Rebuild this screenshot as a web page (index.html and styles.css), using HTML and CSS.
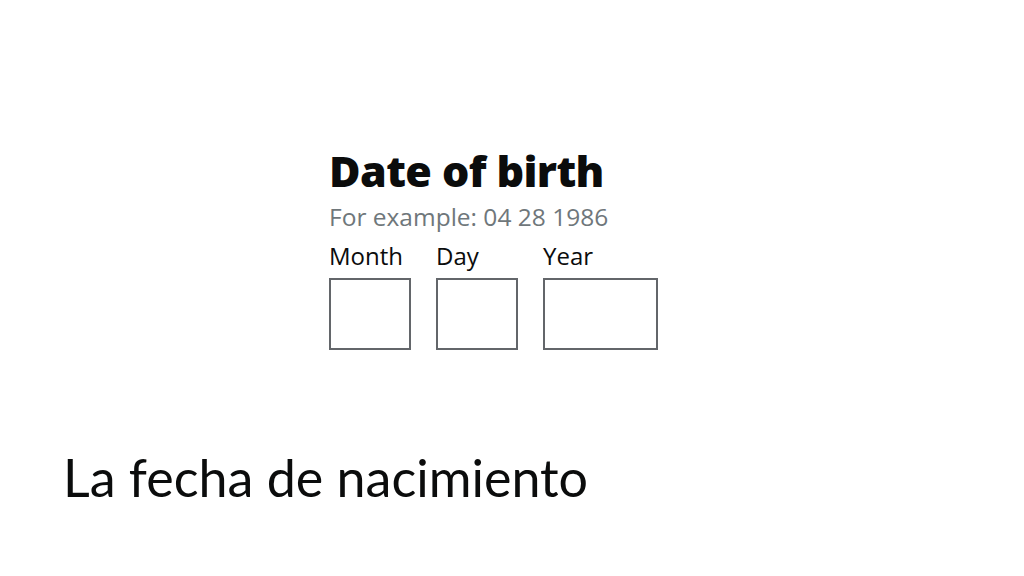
FILE: index.html
```html
<!DOCTYPE html>
<html lang="en">
<head>
    <meta charset="UTF-8">
    <meta name="viewport" content="width=device-width, initial-scale=1.0">
    <title>La fecha de nacimiento</title>
    <link rel="stylesheet" href="styles.css">
</head>
<body>
    <div class="slide">
        <div class="form-sample">
            <h1>Date of birth</h1>
            <p class="hint">For example: 04 28 1986</p>
            <div class="date-fields">
                <div class="field">
                    <label for="month">Month</label>
                    <input type="text" id="month" class="box-2">
                </div>
                <div class="field">
                    <label for="day">Day</label>
                    <input type="text" id="day" class="box-2">
                </div>
                <div class="field">
                    <label for="year">Year</label>
                    <input type="text" id="year" class="box-4">
                </div>
            </div>
        </div>
        <h2 class="caption">La fecha de nacimiento</h2>
    </div>
</body>
</html>
```

FILE: styles.css
```css
body {
    margin: 0;
    background-color: #fff;
    font-family: 'Open Sans', sans-serif;
    color: #0b0c0c;
}
.slide {
    width: 1024px;
    height: 576px;
    box-sizing: border-box;
    padding: 147px 0 0 63px;
}
.form-sample {
    margin-left: 266px;
}
h1 {
    font-size: 43px;
    font-weight: 800;
    line-height: 48px;
    margin: 0;
    letter-spacing: -0.6px;
}
.hint {
    font-size: 24.5px;
    line-height: 34px;
    color: #6f777b;
    margin: 5px 0 0 0;
}
.date-fields {
    display: flex;
    gap: 25px;
}
.field {
    display: flex;
    flex-direction: column;
}
label {
    font-size: 24px;
    line-height: 44px;
}
input {
    height: 72px;
    border: 2px solid #63666a;
    box-sizing: border-box;
    padding: 0;
    margin: 0;
    font-size: 24px;
}
.box-2 {
    width: 82px;
}
.box-4 {
    width: 115px;
}
.caption {
    font-family: 'Lato', sans-serif;
    font-weight: 400;
    font-size: 52px;
    line-height: 60px;
    margin: 97px 0 0 0;
}
```
